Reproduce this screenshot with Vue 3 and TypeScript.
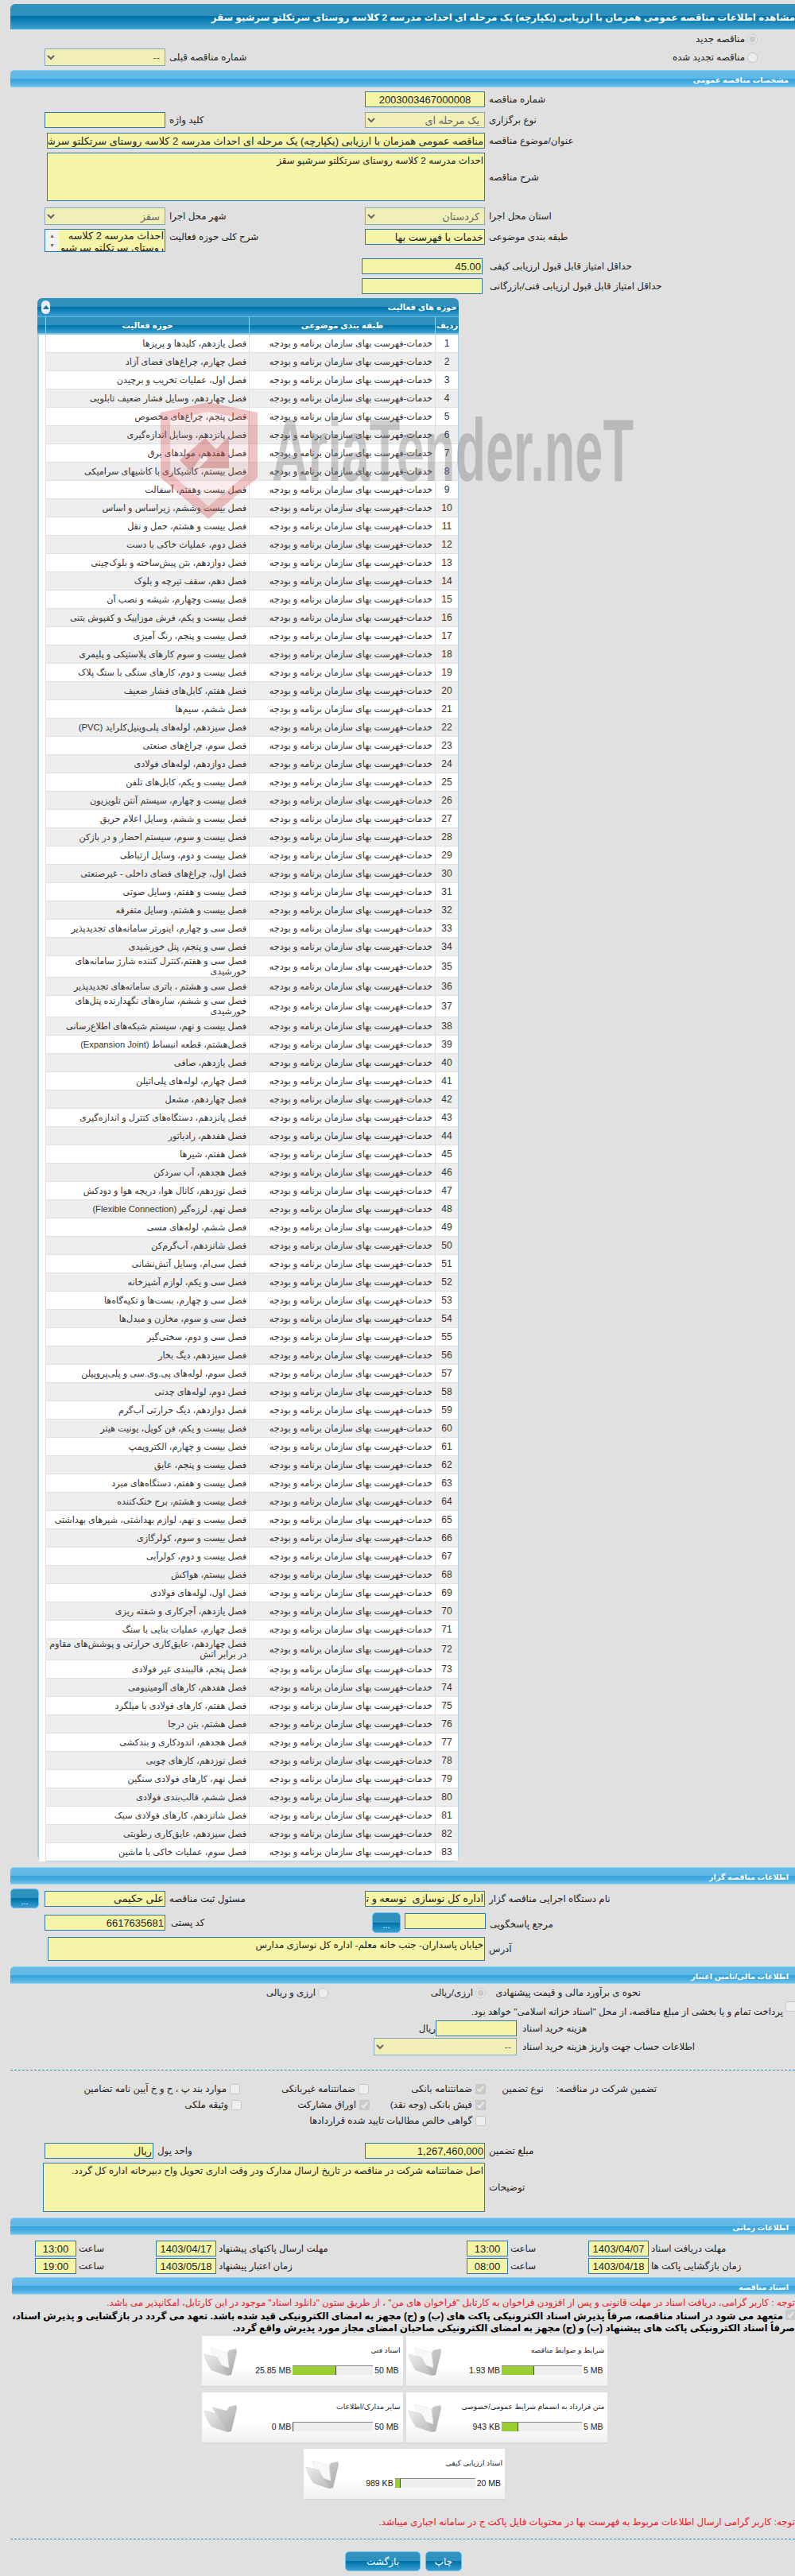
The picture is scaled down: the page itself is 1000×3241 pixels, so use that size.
<script setup lang="ts">
interface Doc { title: string; used: string; max: string; pct: number; paper: boolean }

const activities: string[] = [
  'فصل یازدهم، کلیدها و پریزها','فصل چهارم، چراغ‌های فضای آزاد','فصل اول، عملیات تخریب و برچیدن','فصل چهاردهم، وسایل فشار ضعیف تابلویی','فصل پنجم، چراغ‌های مخصوص','فصل پانزدهم، وسایل اندازه‌گیری','فصل هفدهم، مولدهای برق','فصل بیستم، کاشیکاری با کاشیهای سرامیکی','فصل بیست وهفتم، آسفالت','فصل بیست وششم، زیراساس و اساس',
  'فصل بیست و هشتم، حمل و نقل','فصل دوم، عملیات خاکی با دست','فصل دوازدهم، بتن پیش‌ساخته و بلوک‌چینی','فصل دهم، سقف تیرچه و بلوک','فصل بیست وچهارم، شیشه و نصب آن','فصل بیست و یکم، فرش موزاییک و کفپوش بتنی','فصل بیست و پنجم، رنگ آمیزی','فصل بیست و سوم کارهای پلاستیکی و پلیمری','فصل بیست و دوم، کارهای سنگی با سنگ پلاک','فصل هفتم، کابل‌های فشار ضعیف',
  'فصل ششم، سیم‌ها','فصل سیزدهم، لوله‌های پلی‌وینیل‌کلراید (PVC)','فصل سوم، چراغ‌های صنعتی','فصل دوازدهم، لوله‌های فولادی','فصل بیست و یکم، کابل‌های تلفن','فصل بیست و چهارم، سیستم آنتن تلویزیون','فصل بیست و ششم، وسایل اعلام حریق','فصل بیست و سوم، سیستم احضار و در بازکن','فصل بیست و دوم، وسایل ارتباطی','فصل اول، چراغ‌های فضای داخلی - غیرصنعتی',
  'فصل بیست و هفتم، وسایل صوتی','فصل بیست و هشتم، وسایل متفرقه','فصل سی و چهارم، اینورتر سامانه‌های تجدیدپذیر','فصل سی و پنجم، پنل خورشیدی','فصل سی و هفتم،کنترل کننده شارژ سامانه‌های خورشیدی','فصل سی و هشتم ، باتری سامانه‌های تجدیدپذیر','فصل سی و ششم، سازه‌های نگهدارنده پنل‌های خورشیدی','فصل بیست و نهم، سیستم شبکه‌های اطلاع‌رسانی','فصل‌هشتم، قطعه انبساط (Expansion Joint)','فصل یازدهم، صافی',
  'فصل چهارم، لوله‌های پلی‌اتیلن','فصل چهاردهم، مشعل','فصل پانزدهم، دستگاه‌های کنترل و اندازه‌گیری','فصل هفدهم، رادیاتور','فصل هفتم، شیرها','فصل هجدهم، آب سردکن','فصل نوزدهم، کانال هوا، دریچه هوا و دودکش','فصل نهم، لرزه‌گیر (Flexible Connection)','فصل ششم، لوله‌های مسی','فصل شانزدهم، آب‌گرم‌کن',
  'فصل سی‌ام، وسایل آتش‌نشانی','فصل سی و یکم، لوازم آشپزخانه','فصل سی و چهارم، بست‌ها و تکیه‌گاه‌ها','فصل سی و سوم، مخازن و مبدل‌ها','فصل سی و دوم، سختی‌گیر','فصل سیزدهم، دیگ بخار','فصل سوم، لوله‌های پی.وی.سی و پلی‌پروپیلن','فصل دوم، لوله‌های چدنی','فصل دوازدهم، دیگ حرارتی آب‌گرم','فصل بیست و یکم، فن کویل، یونیت هیتر',
  'فصل بیست و چهارم، الکتروپمپ','فصل بیست و پنجم، عایق','فصل بیست و هفتم، دستگاه‌های مبرد','فصل بیست و هشتم، برج خنک‌کننده','فصل بیست و نهم، لوازم بهداشتی، شیرهای بهداشتی','فصل بیست و سوم، کولرگازی','فصل بیست و دوم، کولرآبی','فصل بیستم، هواکش','فصل اول، لوله‌های فولادی','فصل یازدهم، آجرکاری و شفته ریزی',
  'فصل چهارم، عملیات بنایی با سنگ','فصل چهاردهم، عایق‌کاری حرارتی و پوشش‌های مقاوم در برابر اتش','فصل پنجم، قالببندی غیر فولادی','فصل هفدهم، کارهای آلومینیومی','فصل هفتم، کارهای فولادی با میلگرد','فصل هشتم، بتن درجا','فصل هجدهم، اندودکاری و بندکشی','فصل نوزدهم، کارهای چوبی','فصل نهم، کارهای فولادی سنگین','فصل ششم، قالب‌بندی فولادی',
  'فصل شانزدهم، کارهای فولادی سبک','فصل سیزدهم، عایق‌کاری رطوبتی','فصل سوم، عملیات خاکی با ماشین'
]
const category = 'خدمات-فهرست بهای سازمان برنامه و بودجه'
const title = 'مناقصه عمومی همزمان با ارزیابی (یکپارچه) یک مرحله ای احداث مدرسه 2 کلاسه روستای سرتکلتو سرشیو سقز'

const docRows: Doc[][] = [
  [
    { title: 'شرایط و ضوابط مناقصه', used: '1.93 MB', max: '5 MB', pct: 40, paper: true },
    { title: 'اسناد فنی', used: '25.85 MB', max: '50 MB', pct: 53, paper: true }
  ],
  [
    { title: 'متن قرارداد به انضمام شرایط عمومی/خصوصی', used: '943 KB', max: '5 MB', pct: 20, paper: true },
    { title: 'سایر مدارک/اطلاعات', used: '0 MB', max: '50 MB', pct: 0, paper: false }
  ],
  [{ title: 'اسناد ارزیابی کیفی', used: '989 KB', max: '20 MB', pct: 6, paper: true }]
]
</script>

<template>
  <div class="page">
    <div class="tbar">مشاهده اطلاعات {{ title }}</div>

    <div class="radio-row r1">
      <label class="opt"><input type="radio" disabled checked /><span>مناقصه جدید</span></label>
    </div>
    <div class="fr r2">
      <div class="g l">
        <select class="c w152 h22" disabled dir="rtl"><option>--</option></select>
        <span class="lb">شماره مناقصه قبلی</span>
      </div>
      <div class="g end"><label class="opt"><input type="radio" disabled /><span>مناقصه تجدید شده</span></label></div>
    </div>

    <div class="sec m5">مشخصات مناقصه عمومی</div>

    <div class="fr m5">
      <div class="g l"></div>
      <div class="g"><input class="c w151 h20 center dig" readonly value="2003003467000008" /><span class="lb">شماره مناقصه</span></div>
    </div>
    <div class="fr m6">
      <div class="g l"><input class="c w152 h20" readonly /><span class="lb">کلید واژه</span></div>
      <div class="g"><select class="c w151 h20" disabled dir="rtl"><option>یک مرحله ای</option></select><span class="lb">نوع برگزاری</span></div>
    </div>
    <div class="fr m6">
      <div class="g wide59"><input class="c wide h20" dir="rtl" readonly :value="title" /><span class="lb">عنوان/موضوع مناقصه</span></div>
    </div>
    <div class="fr m5">
      <div class="g wide59"><textarea class="c wide h61" dir="rtl" readonly>احداث مدرسه 2 کلاسه روستای سرتکلتو سرشیو سقز</textarea><span class="lb">شرح مناقصه</span></div>
    </div>
    <div class="fr m8">
      <div class="g l"><select class="c w152 h22" disabled dir="rtl"><option>سقز</option></select><span class="lb">شهر محل اجرا</span></div>
      <div class="g"><select class="c w151 h22" disabled dir="rtl"><option>کردستان</option></select><span class="lb">استان محل اجرا</span></div>
    </div>
    <div class="fr m5 top">
      <div class="g l top">
        <div class="listbox">
          <div class="sb"><span>▲</span><span>▼</span></div>
          <div class="lbtext" dir="rtl">احداث مدرسه 2 کلاسه روستای سرتکلتو سرشیو</div>
        </div>
        <span class="lb">شرح کلی حوزه فعالیت</span>
      </div>
      <div class="g top"><input class="c w151 h20" dir="rtl" readonly value="خدمات با فهرست بها" /><span class="lb">طبقه بندی موضوعی</span></div>
    </div>
    <div class="fr m8">
      <div class="g l"></div>
      <div class="g shift"><input class="c w152 h20 ltr-end dig" readonly value="45.00" /><span class="lb wider">حداقل امتیاز قابل قبول ارزیابی کیفی</span></div>
    </div>
    <div class="fr m5">
      <div class="g l"></div>
      <div class="g shift"><input class="c w152 h20" readonly /><span class="lb wider">حداقل امتیاز قابل قبول ارزیابی فنی/بازرگانی</span></div>
    </div>

    <section class="panel">
      <div class="phead" dir="rtl">
        <span>حوزه های فعالیت</span>
        <span class="collapse"><i></i></span>
      </div>
      <table dir="rtl">
        <colgroup><col class="c1" /><col class="c2" /><col class="c3" /><col class="c4" /></colgroup>
        <thead>
          <tr><th>ردیف</th><th>طبقه بندی موضوعی</th><th>حوزه فعالیت</th><th></th></tr>
        </thead>
        <tbody>
          <tr v-for="(a, i) in activities" :key="i" :class="{ alt: i % 2 === 1 }">
            <td class="num">{{ i + 1 }}</td>
            <td>{{ category }}</td>
            <td class="act-cell">{{ a }}</td>
            <td class="blank"></td>
          </tr>
        </tbody>
      </table>
    </section>

    <div class="sec m7">اطلاعات مناقصه گزار</div>

    <div class="fr m5 rowb">
      <div class="g btnl">
        <button class="dots">...</button>
        <input class="c w152 h20" dir="rtl" readonly value="علی حکیمی" />
        <span class="lb">مسئول ثبت مناقصه</span>
      </div>
      <div class="g"><input class="c w151 h20" dir="rtl" readonly value="اداره کل نوسازی  توسعه و تجهیز مدارس" /><span class="lb">نام دستگاه اجرایی مناقصه گزار</span></div>
    </div>
    <div class="fr m5 rowc">
      <div class="g l"><input class="c w152 h20 ltr-end dig" readonly value="6617635681" /><span class="lb gap">کد پستی</span></div>
      <div class="g btnr">
        <button class="dots tall">...</button>
        <input class="c w102 h20 up" readonly />
        <span class="lb low">مرجع پاسخگویی</span>
      </div>
    </div>
    <div class="fr m5">
      <div class="g wide60"><textarea class="c wide2 h30" dir="rtl" readonly>خیابان پاسداران- جنب خانه معلم- اداره کل نوسازی مدارس</textarea><span class="lb">آدرس</span></div>
    </div>

    <div class="sec m7">اطلاعات مالی/تامین اعتبار</div>

    <div class="finrow">
      <label class="opt second"><input type="radio" disabled /><span>ارزی و ریالی</span></label>
      <label class="opt first"><input type="radio" disabled checked /><span>ارزی/ریالی</span></label>
      <span class="finlb">نحوه ی برآورد مالی و قیمت پیشنهادی</span>
    </div>
    <div class="tre" dir="rtl">
      <input type="checkbox" disabled />
      <span>پرداخت تمام و یا بخشی از مبلغ مناقصه، از محل "اسناد خزانه اسلامی" خواهد بود.</span>
    </div>
    <div class="cost">
      <span class="rial">ریال</span>
      <input class="c w102 h20" readonly />
      <span class="lb">هزینه خرید اسناد</span>
    </div>
    <div class="cost acc">
      <select class="c w180 h22" disabled dir="rtl"><option>--</option></select>
      <span class="lb">اطلاعات حساب جهت واریز هزینه خرید اسناد</span>
    </div>

    <hr class="dash first-dash" />

    <div class="guar">
      <div class="gh">
        <span class="ghn">نوع تضمین</span>
        <span class="ghm">تضمین شرکت در مناقصه:</span>
      </div>
      <div class="gr">
        <label class="chk g3"><span>موارد بند پ ، ح و خ آیین نامه تضامین</span><input type="checkbox" disabled /></label>
        <label class="chk g2"><span>ضمانتنامه غیربانکی</span><input type="checkbox" disabled /></label>
        <label class="chk g1"><span>ضمانتنامه بانکی</span><input type="checkbox" disabled checked /></label>
      </div>
      <div class="gr">
        <label class="chk g3b"><span>وثیقه ملکی</span><input type="checkbox" disabled /></label>
        <label class="chk g2b"><span>اوراق مشارکت</span><input type="checkbox" disabled checked /></label>
        <label class="chk g1"><span>فیش بانکی (وجه نقد)</span><input type="checkbox" disabled checked /></label>
      </div>
      <div class="gr">
        <label class="chk g1"><span>گواهی خالص مطالبات تایید شده قراردادها</span><input type="checkbox" disabled /></label>
      </div>
    </div>

    <div class="fr amount">
      <div class="g l"><input class="c w137 h20" dir="rtl" readonly value="ریال" /><span class="lb">واحد پول</span></div>
      <div class="g"><input class="c w151 h20 ltr-end dig" readonly value="1,267,460,000" /><span class="lb">مبلغ تضمین</span></div>
    </div>
    <div class="fr m5">
      <div class="g wide54"><textarea class="c wide3 h62" dir="rtl" readonly>اصل ضمانتنامه شرکت در مناقصه در تاریخ ارسال مدارک ودر وقت اداری تحویل واح دبیرخانه اداره کل گردد.</textarea><span class="lb">توضیحات</span></div>
    </div>

    <div class="sec m7">اطلاعات زمانی</div>

    <div class="tr m7">
      <div class="tcell t-l">
        <input class="c w52 h20 center dig" readonly value="13:00" /><span class="lb tl1">ساعت</span>
        <input class="c w76 h20 center dig" readonly value="1403/04/17" /><span class="lb">مهلت ارسال پاکتهای پیشنهاد</span>
      </div>
      <div class="tcell t-r">
        <input class="c w52 h20 center dig" readonly value="13:00" /><span class="lb tl2">ساعت</span>
        <input class="c w76 h20 center dig" readonly value="1403/04/07" /><span class="lb">مهلت دریافت اسناد</span>
      </div>
    </div>
    <div class="tr m2">
      <div class="tcell t-l">
        <input class="c w52 h20 center dig" readonly value="19:00" /><span class="lb tl1">ساعت</span>
        <input class="c w76 h20 center dig" readonly value="1403/05/18" /><span class="lb">زمان اعتبار پیشنهاد</span>
      </div>
      <div class="tcell t-r">
        <input class="c w52 h20 center dig" readonly value="08:00" /><span class="lb tl2">ساعت</span>
        <input class="c w76 h20 center dig" readonly value="1403/04/18" /><span class="lb">زمان بازگشایی پاکت ها</span>
      </div>
    </div>

    <div class="sec docs">اسناد مناقصه</div>

    <p class="red note1" dir="rtl">توجه : کاربر گرامی، دریافت اسناد در مهلت قانونی و پس از افزودن فراخوان به کارتابل "فراخوان های من" ، از طریق ستون "دانلود اسناد" موجود در این کارتابل، امکانپذیر می باشد.</p>
    <div class="commit" dir="rtl">
      <div class="cl1"><input type="checkbox" disabled checked /><b>متعهد می شود در اسناد مناقصه، صرفاً پذیرش اسناد الکترونیکی پاکت های (ب) و (ج) مجهز به امضای الکترونیکی قید شده باشد. تعهد می گردد در بازگشایی و پذیرش اسناد،</b></div>
      <div class="cl2"><b>صرفاً اسناد الکترونیکی پاکت های پیشنهاد (ب) و (ج) مجهز به امضای الکترونیکی صاحبان امضای مجاز مورد پذیرش واقع گردد.</b></div>
    </div>

    <div class="docs-wrap">
      <div v-for="(row, r) in docRows" :key="r" class="doc-row">
        <div v-for="d in row" :key="d.title" class="card">
          <svg class="folder" viewBox="0 0 43 37" width="43" height="37">
            <defs>
              <linearGradient id="fb" x1="0" y1="0" x2="1" y2="1"><stop offset="0" stop-color="#dcdcdc" /><stop offset="1" stop-color="#a9a9a9" /></linearGradient>
              <linearGradient id="ff" x1="0" y1="0" x2="1" y2="1"><stop offset="0" stop-color="#eeeeee" /><stop offset="1" stop-color="#b9b9b9" /></linearGradient>
            </defs>
            <path d="M10 4 L29 9 L32 4 L41 2 L42 6 L35 35 L30 36 Z" fill="url(#fb)" />
            <path v-if="d.paper" d="M9 1 L30 7 L32 26 L14 20 Z" fill="#f8f8f8" stroke="#dddddd" stroke-width=".5" />
            <path d="M1 9 L17 13 L30 36 L10 29 C6 23 2 15 1 9 Z" fill="url(#ff)" stroke="#c8c8c8" stroke-width=".5" />
          </svg>
          <div class="cbody">
            <div class="ctitle" dir="rtl">{{ d.title }}</div>
            <div class="cbar">
              <span>{{ d.used }}</span>
              <div class="bar"><div class="fill" :style="{ width: d.pct + '%' }"></div></div>
              <span>{{ d.max }}</span>
            </div>
          </div>
        </div>
      </div>
    </div>

    <p class="red note2" dir="rtl">توجه: کاربر گرامی ارسال اطلاعات مربوط به فهرست بها در محتویات فایل پاکت ج در سامانه اجباری میباشد.</p>

    <hr class="dash last-dash" />

    <div class="actions">
      <button class="act back">بازگشت</button>
      <button class="act print">چاپ</button>
    </div>

    <svg class="mark" viewBox="0 0 610 150" width="610" height="150">
      <path fill-rule="evenodd" d="M2 14 L62 1 L124 14 L124 96 L62 148 L2 96 Z M14 23 L14 90 L62 132 L112 90 L112 23 L62 13 Z" fill="#d24a4a" opacity=".32" />
      <path d="M14 23 L62 13 L112 23 L112 90 L62 132 L14 90 Z" fill="#e08a8a" opacity=".16" />
      <path d="M26 74 L58 46 L72 60 L88 44 L88 84 L50 84 L62 72 L56 66 L40 88 Z" fill="#b83a3a" opacity=".34" />
      <text x="142" y="100" class="marktext" textLength="455" lengthAdjust="spacingAndGlyphs">AriaTender.neT</text>
    </svg>
  </div>
</template>

<style>
html, body { margin: 0; background: #e0e0e0; }
</style>

<style scoped>
.page {
  position: relative;
  width: 1000px;
  height: 3241px;
  overflow: hidden;
  background: #e0e0e0;
  padding-top: 5px;
  box-sizing: border-box;
  font-family: "Liberation Sans", "DejaVu Sans", sans-serif;
  font-size: 11.8px;
  color: #222;
}
.tbar {
  margin-left: 13px;
  height: 32px;
  line-height: 34px;
  direction: rtl;
  white-space: nowrap;
  color: #fff;
  font-weight: bold;
  font-size: 11.84px;
  padding-right: 0;
  border-radius: 6px 0 0 0;
  border-bottom: 1px solid #44a8d8;
  box-sizing: border-box;
  background: linear-gradient(#3093c0 0, #2f90bd 50%, #0071a8 50%, #0f7fb4 65%, #3b9fd0 100%);
}
.sec {
  margin-left: 13px;
  height: 22px;
  line-height: 23px;
  box-sizing: border-box;
  direction: rtl;
  color: #fff;
  font-weight: bold;
  font-size: 9.6px;
  padding-right: 8px;
  border-radius: 5px 0 0 0;
  border-top: 1px solid #8dd3f2;
  border-bottom: 1px solid #8dd3f2;
  background: linear-gradient(#66bce9 0, #5fb8e6 50%, #37a3dd 50%, #45abdf 75%, #6fc3ed 100%);
}
.docs { margin-left: 15px; margin-top: 4px; }
.m2 { margin-top: 2px; }
.m5 { margin-top: 5px; }
.m6 { margin-top: 6px; }
.m7 { margin-top: 7px; }
.m8 { margin-top: 8px; }

.radio-row { height: 24px; display: flex; justify-content: flex-end; align-items: center; padding-right: 47px; }
.fr { display: grid; grid-template-columns: 459px 541px; align-items: center; }
.fr.top { align-items: start; }
.r2 { height: 22px; }
.g { display: flex; align-items: center; min-width: 0; }
.g.top { align-items: flex-start; }
.g.l { padding-left: 56px; }
.g.end { justify-content: flex-end; padding-right: 47px; }
.g.shift { margin-left: -4px; }
.wide59 { grid-column: 1 / 3; padding-left: 59px; }
.wide60 { grid-column: 1 / 3; padding-left: 60px; }
.wide54 { grid-column: 1 / 3; padding-left: 54px; }
.btnl { padding-left: 13px; }
.btnl .dots { margin-right: 7px; }
.btnr { margin-left: 9px; align-items: flex-start; }
.btnr .dots { margin-right: 5px; }
.btnr .up { margin-top: 1px; }
.btnr .low { margin-top: 5px; }
.rowb { height: 25px; }
.rowc { height: 26px; }

.c {
  box-sizing: border-box;
  background: #f6f4a6;
  border: 1px solid #2f78a8;
  border-radius: 0;
  font-family: inherit;
  font-size: 12.8px;
  color: #222;
  padding: 0 1px;
  margin: 0;
  outline: none;
  opacity: 1;
  flex: none;
  resize: none;
  overflow: hidden;
}
.dig { font-size: 13px; }
input.c { direction: rtl; }
select.c {
  background: #f1efb6;
  border-color: #7fa9c4;
  color: #666;
  padding-right: 2px;
}
textarea.c { line-height: 14px; padding: 2px 1px; font-size: 11.8px; }
.center { text-align: center; }
.ltr-end { text-align: right; direction: ltr !important; }
.w52 { width: 52px; }
.w76 { width: 76px; }
.w102 { width: 102px; }
.w137 { width: 137px; }
.w151 { width: 151px; }
.w152 { width: 152px; }
.w180 { width: 180px; }
.wide { width: 551px; }
.wide2 { width: 550px; }
.wide3 { width: 556px; }
.h20 { height: 20px; }
.h22 { height: 22px; }
.h30 { height: 30px; }
.h61 { height: 61px; }
.h62 { height: 62px; }

.lb { direction: rtl; margin-left: 5px; white-space: nowrap; line-height: 20px; font-size: 11.8px; }
.lb.gap { margin-left: 7px; }
.lb.wider { margin-left: 9px; }

.opt { display: inline-flex; direction: rtl; align-items: center; gap: 3px; font-size: 11.8px; white-space: nowrap; }
.opt input { margin: 0; width: 13px; height: 13px; }

.listbox { width: 152px; height: 29px; box-sizing: border-box; border: 1px solid #2f78a8; background: #f6f4a6; display: flex; overflow: hidden; flex: none; }
.sb { width: 17px; background: #f3f3f3; display: flex; flex-direction: column; justify-content: space-between; align-items: center; font-size: 7px; color: #666; flex: none; padding: 4px 0 3px; line-height: 8px; box-sizing: border-box; }
.lbtext { flex: 1; font-size: 12.8px; line-height: 15px; padding: 0 1px; }

.panel {
  margin: 5px 0 0 47px;
  width: 530px;
  box-sizing: border-box;
  border-radius: 6px;
  overflow: hidden;
  background: #fff;
}
.phead {
  height: 23px;
  line-height: 23px;
  display: flex;
  justify-content: space-between;
  align-items: center;
  padding: 0 2px 0 5px;
  color: #fff;
  font-weight: bold;
  font-size: 10.3px;
  background: linear-gradient(#3093c0 0, #2f90bd 50%, #0071a8 50%, #0f7fb4 65%, #3b9fd0 100%);
}
.collapse { width: 11px; height: 17px; border-radius: 6px; background: #e8eef6; display: inline-flex; align-items: center; justify-content: center; }
.collapse i { width: 0; height: 0; border-left: 4px solid transparent; border-right: 4px solid transparent; border-bottom: 5px solid #1d6f9e; }
table { width: 530px; table-layout: fixed; border-collapse: separate; border-spacing: 0; font-size: 11.2px; }
.c1 { width: 30px; }
.c2 { width: 234px; }
.c3 { width: 256px; }
.c4 { width: 10px; }
th {
  height: 23px;
  box-sizing: border-box;
  color: #fff;
  font-size: 10.3px;
  padding: 0;
  text-align: center;
  border-left: 1px solid #8fd3f2;
  background: linear-gradient(#3093c0 0, #2f90bd 50%, #0071a8 50%, #0f7fb4 65%, #3b9fd0 100%);
  border-top: 1px solid #5fb6e0;
  border-bottom: 2px solid #7cc6ee;
}
th:last-child { border-left: 0; }
td {
  height: 23px;
  box-sizing: border-box;
  padding: 0 3px;
  line-height: 13px;
  border-bottom: 1px solid #e0e0e0;
  border-left: 1px solid #e0e0e0;
  color: #333;
  vertical-align: middle;
}
td.act-cell { padding-left: 0; }
tr.alt td { background: #eeeeee; }
td.num { text-align: center; font-size: 12px; padding: 0; border-right: 1px solid #a8cfea; }
td.blank, tr.alt td.blank { background: #fff; border-left: 2px solid #a8cfea; border-bottom: 0; }
tbody tr:last-child td { border-bottom-color: #a8cfea; }

.finrow { position: relative; height: 24px; }
.finlb { position: absolute; right: 194px; top: 4px; direction: rtl; font-size: 11.8px; white-space: nowrap; }
.finrow .first { position: absolute; right: 389px; top: 4px; }
.finrow .second { position: absolute; right: 587px; top: 4px; }
.tre { height: 22px; display: flex; align-items: center; white-space: nowrap; gap: 3px; font-size: 11.8px; }
.tre input { margin: -2px -1px 0 0; width: 13px; height: 13px; align-self: flex-start; flex: none; }
.cost { display: flex; align-items: center; margin-left: 528px; height: 20px; }
.cost.acc { margin-left: 470px; height: 22px; margin-top: 2px; }
.rial { width: 20px; direction: rtl; font-size: 11.8px; }
.cost .lb { margin-left: 7px; }
.dash { border: 0; border-top: 1px dashed #2d8fbf; margin: 0 0 0 13px; height: 0; }
.first-dash { margin-top: 18px; }

.guar { margin-top: 13px; position: relative; direction: rtl; }
.gh { position: absolute; right: 174px; top: 0; display: flex; gap: 16px; font-size: 11.8px; line-height: 20px; flex-direction: row-reverse; }
.gr { height: 20px; position: relative; }
.chk { position: absolute; top: 0; display: flex; align-items: center; gap: 2px; direction: ltr; font-size: 11.8px; line-height: 20px; white-space: nowrap; }
.chk span { direction: rtl; }
.chk input { margin: 0 0 0 2px; width: 13px; height: 13px; }
.g1 { right: 389px; }
.g2 { right: 536px; }
.g3 { right: 698px; }
.g2b { right: 535px; }
.g3b { right: 696px; }
.amount { margin-top: 18px; }

.tr { display: grid; grid-template-columns: 543px 413px; margin-left: 44px; }
.tcell { display: flex; align-items: center; min-width: 0; }
.t-r .lb:last-child, .t-l .lb:last-child { margin-left: 3px; }
.tl1 { width: 97px; margin-left: 3px; text-align: left; }
.tl2 { width: 98px; margin-left: 3px; text-align: left; }

.red { color: #f0141e; margin: 0; font-size: 11.8px; white-space: nowrap; line-height: 14px; }
.note1 { margin-top: 3px; height: 14px; }
.commit { margin-top: 3px; color: #000; font-size: 11.88px; white-space: nowrap; line-height: 15px; }
.cl1 { display: flex; align-items: center; }
.cl1 input { margin: -4px -1px 0 3px; width: 13px; height: 13px; flex: none; }
.docs-wrap { margin-top: 2px; display: flex; flex-direction: column; align-items: center; gap: 8px; padding-left: 17px; }
.doc-row { display: flex; gap: 4px; direction: rtl; }
.card {
  width: 253px;
  height: 63px;
  box-sizing: border-box;
  display: flex;
  direction: ltr;
  align-items: center;
  padding: 0 5px 0 2px;
  background: linear-gradient(#ffffff 0, #ffffff 60%, #efefef 100%);
  box-shadow: 0 1px 1px #d4d4d4;
}
.folder { flex: none; margin-top: 2px; }
.cbody { flex: 1; min-width: 0; }
.ctitle { font-size: 9.2px; line-height: 14px; margin: -3px -2px 12px 0; white-space: nowrap; color: #222; }
.cbar { display: flex; justify-content: flex-end; align-items: center; gap: 2px; font-size: 10.5px; line-height: 12px; color: #222; }
.bar { width: 101px; height: 12px; box-sizing: border-box; background: #eee; border-top: 1px solid #888; }
.fill { height: 11px; background: #9acd32; box-sizing: content-box; border-right: 1px solid #444; }
.note2 { margin-top: 22px; }
.last-dash { margin-top: 14px; }
.actions { display: flex; gap: 6px; margin: 15px 0 0 434px; }
.act, .dots {
  border: 1px solid #6cc0ea;
  color: #fff;
  font-family: inherit;
  border-radius: 5px;
  padding: 0;
  margin: 0;
  background: linear-gradient(#3093c0 0, #2f90bd 50%, #0071a8 50%, #0f7fb4 65%, #3b9fd0 100%);
}
.act { height: 25px; font-size: 12px; }
.back { width: 95px; }
.print { width: 46px; }
.dots { width: 36px; height: 25px; font-size: 11px; line-height: 30px; flex: none; }
.dots.tall { height: 26px; }

.mark { position: absolute; left: 200px; top: 505px; pointer-events: none; }
.marktext { font-family: "Liberation Sans", sans-serif; font-weight: bold; font-size: 112px; fill: #777; opacity: .36; }
</style>
